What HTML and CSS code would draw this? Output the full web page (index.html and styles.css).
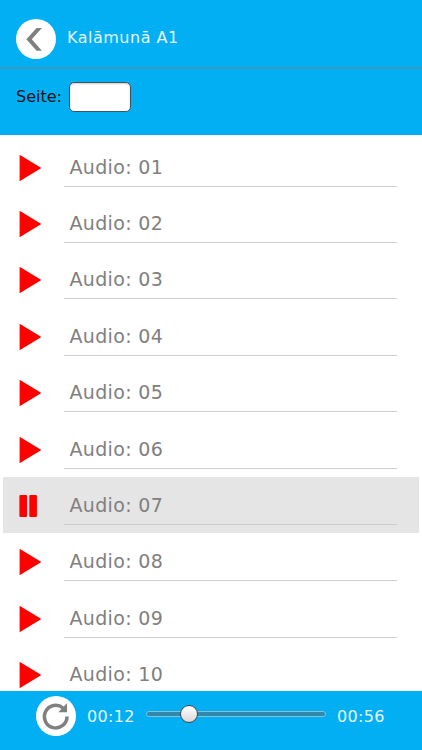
FILE: index.html
```
<!DOCTYPE html>
<html lang="de">
<head>
<meta charset="utf-8">
<title>Kalāmunā A1</title>
<link rel="stylesheet" href="styles.css">
</head>
<body>
<svg class="defs" width="0" height="0">
  <symbol id="play" viewBox="0 0 22 28"><path d="M.6 1.6Q.6.7 1.4 1.2L21.6 13.4Q22.2 14 21.6 14.6L1.4 26.8Q.6 27.3.6 26.4Z"/></symbol>
  <symbol id="pause" viewBox="0 0 22 28"><rect x=".4" y="3" width="7.6" height="22" rx="1"/><rect x="10.3" y="3" width="7.6" height="22" rx="1"/></symbol>
</svg>
<div class="app">
  <header class="header">
    <div class="titlebar">
      <button class="round" aria-label="Zurück"><svg viewBox="0 0 40 40"><path class="chevron" d="M20.6 9h5.3L15.8 20.3l10.1 11.4h-5.3L10.3 20.3z"/></svg></button>
      <h1 class="title">Kalāmunā A1</h1>
    </div>
    <div class="search">
      <label class="search-label" for="page">Seite:</label>
      <input class="page" id="page" type="text">
    </div>
  </header>
  <main class="list">
    <div class="row"><svg class="icon"><use href="#play"/></svg><div class="name">Audio: 01</div></div>
    <div class="row"><svg class="icon"><use href="#play"/></svg><div class="name">Audio: 02</div></div>
    <div class="row"><svg class="icon"><use href="#play"/></svg><div class="name">Audio: 03</div></div>
    <div class="row"><svg class="icon"><use href="#play"/></svg><div class="name">Audio: 04</div></div>
    <div class="row"><svg class="icon"><use href="#play"/></svg><div class="name">Audio: 05</div></div>
    <div class="row"><svg class="icon"><use href="#play"/></svg><div class="name">Audio: 06</div></div>
    <div class="row active"><svg class="icon"><use href="#pause"/></svg><div class="name">Audio: 07</div></div>
    <div class="row"><svg class="icon"><use href="#play"/></svg><div class="name">Audio: 08</div></div>
    <div class="row"><svg class="icon"><use href="#play"/></svg><div class="name">Audio: 09</div></div>
    <div class="row"><svg class="icon"><use href="#play"/></svg><div class="name">Audio: 10</div></div>
  </main>
  <footer class="player">
    <button class="round" aria-label="Wiederholen"><svg viewBox="0 0 40 40"><path class="loop" d="M27 12A11.3 11.3 0 1 0 31 20.6"/><path class="chevron" d="M31 7.2V16.3H22.2z"/></svg></button>
    <span class="time">00:12</span>
    <div class="track"><div class="knob"></div></div>
    <span class="time">00:56</span>
  </footer>
</div>
</body>
</html>
```
FILE: styles.css
```
* { box-sizing: border-box; }
body {
  margin: 0;
  background: #fff;
  font-family: Verdana, "DejaVu Sans", sans-serif;
}
.defs { position: absolute; }
.app {
  display: flex;
  flex-direction: column;
  width: 422px;
  height: 750px;
  overflow: hidden;
}
.header {
  flex: none;
  height: 135px;
  background: #03aff3;
}
.titlebar {
  display: flex;
  align-items: flex-start;
  gap: 11px;
  height: 69px;
  padding: 19px 0 0 16px;
  border-bottom: 2px solid #3c98bd;
}
.round {
  flex: none;
  width: 40px;
  height: 40px;
  padding: 0;
  border: 0;
  border-radius: 50%;
  background: #fff;
}
.round svg { display: block; width: 40px; height: 40px; }
.chevron { fill: #808080; }
.loop { fill: none; stroke: #808080; stroke-width: 3.5; }
.title {
  margin: 9px 0 0;
  color: #e4f6ff;
  font-size: 16px;
  font-weight: 400;
  line-height: 20px;
  letter-spacing: 0.5px;
}
.search {
  display: flex;
  align-items: center;
  gap: 7px;
  padding: 13px 0 0 16px;
}
.search-label { font-size: 16px; line-height: 20px; color: #08141a; }
.page {
  width: 62px;
  height: 30px;
  border: 1px solid #3e5663;
  border-radius: 5px;
  background: #fff;
  box-shadow: inset 0 1px 2px #ccc;
}
.list {
  flex: 1;
  min-height: 0;
  overflow: hidden;
  padding: 3.8px 3.5px 0 2.5px;
}
.row {
  display: flex;
  align-items: flex-start;
  height: 56.35px;
  padding: 0 21.5px 0 16.5px;
}
.active { background: #e5e5e5; }
.icon {
  flex: none;
  width: 22px;
  height: 28px;
  margin: 15px 23px 0 0;
  fill: #f00;
}
.name {
  flex: 1;
  height: 48px;
  padding: 16px 0 0 5.5px;
  border-bottom: 1px solid #cfcfcf;
  color: #808080;
  font-size: 19px;
  line-height: 24px;
  letter-spacing: 0.33px;
}
.player {
  display: flex;
  flex: none;
  align-items: center;
  height: 59px;
  padding: 0 0 9px 36px;
  background: #03aff3;
}
.player .time {
  width: 48px;
  margin: 2px 0 0 11px;
  color: #e4f6ff;
  font-size: 16px;
  line-height: 20px;
  letter-spacing: 0.3px;
}
.track {
  position: relative;
  width: 180px;
  height: 6px;
  margin: -4px 0 0 11px;
  border: 1px solid #7fc0dc;
  border-radius: 3px;
  background: #3387ab;
}
.knob {
  position: absolute;
  top: -7px;
  left: 33px;
  width: 18px;
  height: 18px;
  border: 1px solid #434b50;
  border-radius: 50%;
  background: linear-gradient(#fff, #d8d8d8);
}
```
